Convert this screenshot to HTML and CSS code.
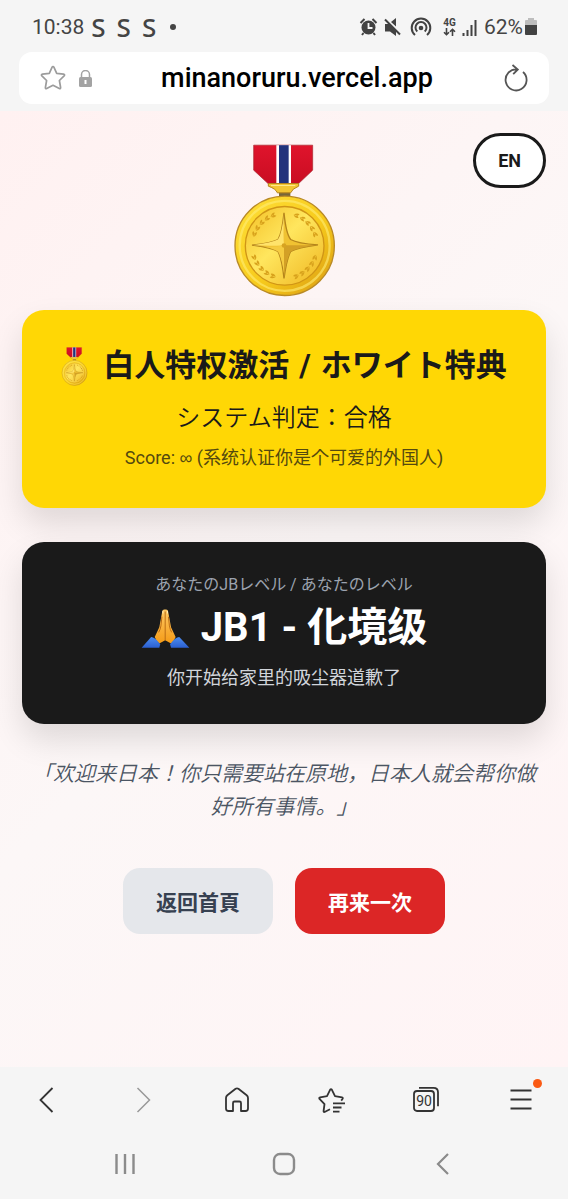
FILE: index.html
```html
<!DOCTYPE html>
<html lang="ja">
<head>
<meta charset="utf-8">
<meta name="viewport" content="width=device-width, initial-scale=1">
<title>minanoruru</title>
<link rel="stylesheet" href="styles.css">
</head>
<body>
<svg class="defs" aria-hidden="true">
  <defs>
    <linearGradient id="rim" x1="0" y1="0" x2="1" y2="1">
      <stop offset="0" stop-color="#ffe03a"/><stop offset=".55" stop-color="#f7cb1c"/><stop offset="1" stop-color="#d99a12"/>
    </linearGradient>
    <linearGradient id="face" x1="0" y1="0" x2="1" y2="1">
      <stop offset="0" stop-color="#f3bf25"/><stop offset=".45" stop-color="#ffe65e"/><stop offset="1" stop-color="#efb51f"/>
    </linearGradient>
    <linearGradient id="red" x1="0" y1="0" x2="0" y2="1">
      <stop offset="0" stop-color="#e0142c"/><stop offset="1" stop-color="#c90d22"/>
    </linearGradient>
    <linearGradient id="skin" x1="0" y1="0" x2="0" y2="1">
      <stop offset="0" stop-color="#ffc964"/><stop offset="1" stop-color="#f59b16"/>
    </linearGradient>
    <linearGradient id="cuff" x1="0" y1="0" x2="0" y2="1">
      <stop offset="0" stop-color="#4c8df0"/><stop offset="1" stop-color="#2b5fd0"/>
    </linearGradient>
    <g id="leaf">
      <path d="M224 252q9-10 17-6q-6 9-17 6zM224 252q8 10 17 5q-6-9-17-5z" fill="#d8a21c"/>
    </g>
    <g id="wreath">
      <use href="#leaf" transform="rotate(16 224 349)"/><use href="#leaf" transform="rotate(28 224 349)"/>
      <use href="#leaf" transform="rotate(40 224 349)"/><use href="#leaf" transform="rotate(52 224 349)"/>
      <use href="#leaf" transform="rotate(64 224 349)"/>
    </g>
    <symbol id="medal" viewBox="66 42 315 462">
      <path d="M131 47H308V122L265 163H175L131 122Z" fill="url(#red)" stroke="#a8242c" stroke-width="2"/>
      <path d="M199 47h44v116h-44z" fill="#fff"/>
      <path d="M207 47h29v116h-29z" fill="#22337c"/>
      <path d="M207 182h34v20h-34z" fill="#77663a"/>
      <path d="M175 162H266V170Q246 178 242 190H202Q198 178 175 170Z" fill="#f3c633" stroke="#b5841a" stroke-width="3"/>
      <path d="M183 168H256" stroke="#ffe98a" stroke-width="3"/>
      <circle cx="224" cy="349" r="149" fill="url(#rim)" stroke="#b98a25" stroke-width="4"/>
      <circle cx="224" cy="349" r="135" fill="none" stroke="#ffed75" stroke-width="7" opacity=".6"/>
      <circle cx="224" cy="349" r="118" fill="url(#face)" stroke="#d09516" stroke-width="4"/>
      <use href="#wreath"/><use href="#wreath" transform="rotate(90 224 349)"/>
      <use href="#wreath" transform="rotate(180 224 349)"/><use href="#wreath" transform="rotate(270 224 349)"/>
      <path d="M222 250Q228 312 242 330Q262 342 324 346Q262 354 242 366Q230 388 222 447Q216 388 204 366Q184 354 126 347Q184 340 204 330Q216 312 222 250Z" fill="#f0c232" stroke="#b5851c" stroke-width="4"/>
      <path d="M222 254Q219 320 222 347Q180 350 130 347Q184 340 204 330Q216 312 222 254Z" fill="#ffe36b"/>
      <path d="M222 443V347H320Q262 354 242 366Q230 388 222 443Z" fill="#d3a026"/>
      <path d="M222 347Q184 356 142 348Q184 354 204 366Q216 388 222 432Z" fill="#f5cb41"/>
      <circle cx="222" cy="348" r="7" fill="#d7a321"/>
    </symbol>
  </defs>
</svg>

<header class="chrome">
  <div class="status">
    <span class="clock">10:38</span>
    <div class="notes"><span>S</span><span>S</span><span>S</span></div>
    <svg class="dot" viewBox="0 0 6 6" width="6" height="6"><circle cx="3" cy="3" r="3" fill="#444"/></svg>
    <div class="status-right">
      <svg width="19" height="20" viewBox="0 0 19 20"><circle cx="9.500" cy="10.500" r="7" fill="#424242"/><path d="M1.500 6l4-4M17.500 6l-4-4M4.500 16l-1.500 2M14.500 16l1.500 2" stroke="#424242" stroke-width="2"/><path d="M9.500 6v5h4" fill="none" stroke="#f5f5f5" stroke-width="1.800"/></svg>
      <svg class="mute" width="17" height="20" viewBox="0 0 17 20"><path d="M1 7h4l7 7v5l-6-4.500H1zM7 5l5-4v8.500z" fill="#424242"/><path d="M1 2.500l15 15" stroke="#424242" stroke-width="2"/></svg>
      <svg class="hotspot" width="22" height="20" viewBox="0 0 22 20"><g fill="none" stroke="#424242" stroke-width="2"><path d="M5 18a9.300 9.300 0 1 1 12 0"/><path d="M7.300 14.600a5.500 5.500 0 1 1 7.400 0"/></g><circle cx="11" cy="11" r="2.300" fill="#424242"/></svg>
      <div class="net"><span>4G</span><svg width="13" height="8" viewBox="0 0 13 8"><path d="M3.500 0v6.500M1 4.200l2.500 2.500L6 4.200M9.500 8V1.500M7 3.800l2.500-2.500L12 3.800" fill="none" stroke="#424242" stroke-width="1.600"/></svg></div>
      <svg width="16" height="17" viewBox="0 0 16 17"><path d="M1.500 17v-3M5.500 17v-6M9.500 17V6M13.500 17V1" stroke="#424242" stroke-width="2"/></svg>
      <span class="percent">62%</span>
      <svg width="12" height="18" viewBox="0 0 12 18"><path d="M3 0h6v2h2a1 1 0 0 1 1 1v5H0V3a1 1 0 0 1 1-1h2z" fill="#bdbdbd"/><path d="M0 7h12v9a1 1 0 0 1-1 1H1a1 1 0 0 1-1-1z" fill="#424242"/></svg>
    </div>
  </div>
  <div class="urlbar">
    <button class="icon" aria-label="Bookmark"><svg width="26" height="26" viewBox="0 0 26 26"><path d="M13 1.500q.6 0 1 .9l2.700 6 6.800.8q1.800.3.600 1.600l-4.700 4.700 1.200 7q.1 1.600-1.300 1L13 20.300l-6.300 3.200q-1.400.6-1.300-1l1.200-7-4.700-4.700q-1.200-1.300.6-1.600l6.800-.8 2.700-6q.4-.9 1-.9z" fill="none" stroke="#9c9c9c" stroke-width="1.700" stroke-linejoin="round"/></svg></button>
    <svg class="lock" width="13" height="17" viewBox="0 0 13 17"><path d="M2.500 7.500V4.500a4 4 0 0 1 8 0v3" fill="none" stroke="#a3a3a3" stroke-width="1.500"/><rect y="7" width="13" height="10" rx="1.500" fill="#a3a3a3"/><path d="M6.500 10v4" stroke="#fff" stroke-width="2"/></svg>
    <span class="url">minanoruru.vercel.app</span>
    <button class="icon" aria-label="Reload"><svg width="26" height="28" viewBox="0 0 26 28"><path d="M21 8A10.500 10.500 0 1 1 15.500 5.500M10.500 1l5.300 4.500-4.600 4.700" fill="none" stroke="#555" stroke-width="1.800"/></svg></button>
  </div>
</header>

<main class="page">
  <button class="lang">EN</button>
  <svg class="hero" role="img" aria-label="勲章"><use href="#medal"/></svg>

  <section class="card gold">
    <h1><svg class="mini" aria-hidden="true"><use href="#medal"/></svg><span class="title"><span>白人特权激活</span><span>/</span><span>ホワイト特典</span></span></h1>
    <p class="verdict">システム判定：合格</p>
    <p class="small score">Score: <span class="infinity">∞</span> (系统认证你是个可爱的外国人)</p>
  </section>

  <section class="card dark">
    <p class="label">あなたのJBレベル / あなたのレベル</p>
    <h2><svg class="hands" viewBox="360 200 150 124" aria-hidden="true">
      <path d="M434 204q-8-2-9 6l-9 48-14 30q4 12 14 20l18-10zM434 204q8-2 9 6l9 48 14 30q-4 12-14 20l-18-10z" fill="url(#skin)"/>
      <path d="M434 210v88M424 226l-3 28q-2 12-7 20M444 226l3 28q2 12 7 20" fill="none" stroke="#b96b13" stroke-width="3"/>
      <path d="M427 208v8M441 208v8" stroke="#fff0bf" stroke-width="3"/>
      <path d="M391 288Q402 288 419 310L416 321H362Z" fill="url(#cuff)"/>
      <path d="M477 288Q466 288 449 310L452 321H508Z" fill="url(#cuff)"/>
    </svg> JB1 - 化境级</h2>
    <p class="small">你开始给家里的吸尘器道歉了</p>
  </section>

  <p class="quote">「欢迎来日本！你只需要站在原地，日本人就会帮你做好所有事情。」</p>

  <div class="actions">
    <button class="btn home">返回首頁</button>
    <button class="btn again">再来一次</button>
  </div>
</main>

<footer class="chrome">
  <nav class="toolbar">
    <button class="icon" aria-label="Back"><svg width="28" height="28" viewBox="0 0 28 28"><path d="M19.500 2L7.500 14l12 12" fill="none" stroke="#333" stroke-width="1.800"/></svg></button>
    <button class="icon" aria-label="Forward"><svg width="28" height="28" viewBox="0 0 28 28"><path d="M9.500 2l12 12-12 12" fill="none" stroke="#999" stroke-width="1.500"/></svg></button>
    <button class="icon" aria-label="Home"><svg width="28" height="28" viewBox="0 0 28 28"><path d="M3 12q0-1.800 1.300-2.800l8.300-6.400q1.400-1 2.800 0l8.300 6.400Q25 10.200 25 12v10.500a2.500 2.500 0 0 1-2.500 2.500H18v-8q0-1.500-1.500-1.500h-5Q10 15.500 10 17v8H5.500A2.500 2.500 0 0 1 3 22.500z" fill="none" stroke="#333" stroke-width="1.800" stroke-linejoin="round"/></svg></button>
    <button class="icon" aria-label="Bookmarks"><svg width="28" height="28" viewBox="0 0 28 28"><path d="M13 23.300L7.600 26q-1.200.4-1-1l.9-6.800-5-5.300q-.8-1.200.6-1.500l6.900-1.300 3.200-6.500q.8-1.100 1.600 0l3.200 6.500 7 1.300q1.400.4.500 1.600l-1.300 1.600M16 17.300h12M16 21.500h8.500M16 25.700h6.500" fill="none" stroke="#333" stroke-width="1.800" stroke-linejoin="round"/></svg></button>
    <button class="icon tabs" aria-label="Tabs"><svg width="28" height="28" viewBox="0 0 28 28"><rect x="2" y="5" width="20" height="20" rx="3" fill="none" stroke="#333" stroke-width="1.800"/><path d="M7 1.800h14.500q4.500 0 4.500 4.500v14" fill="none" stroke="#333" stroke-width="1.800"/><text x="12" y="20" text-anchor="middle">90</text></svg></button>
    <button class="icon menu" aria-label="Menu"><svg width="28" height="28" viewBox="0 0 28 28"><path d="M3.500 4.500h21M3.500 13.500h21M3.500 22.500h21" stroke="#333" stroke-width="1.800"/></svg><span class="badge"></span></button>
  </nav>
  <nav class="sysnav">
    <button class="icon" aria-label="Recents"><svg width="24" height="24" viewBox="0 0 24 24"><path d="M3.500 2v20M12 2v20M20.500 2v20" stroke="#8b8b8b" stroke-width="2.400"/></svg></button>
    <button class="icon" aria-label="Home screen"><svg width="24" height="24" viewBox="0 0 24 24"><rect x="2" y="2" width="20" height="20" rx="6" fill="none" stroke="#8b8b8b" stroke-width="2.400"/></svg></button>
    <button class="icon" aria-label="System back"><svg width="24" height="24" viewBox="0 0 24 24"><path d="M17 2L7 12l10 10" fill="none" stroke="#8b8b8b" stroke-width="2.200"/></svg></button>
  </nav>
</footer>
</body>
</html>
```
FILE: styles.css
```css
* { box-sizing: border-box; }

body {
  margin: 0;
  min-height: 100vh;
  display: flex;
  flex-direction: column;
  font-family: Roboto, "Noto Sans CJK JP", sans-serif;
  color: #1a1a1a;
  text-spacing-trim: space-all;
}

h1, h2, p { margin: 0; }
svg { display: block; flex: none; }
button { font-family: inherit; border: 0; cursor: pointer; }
.defs { position: absolute; width: 0; height: 0; }
.chrome { background: #f5f5f5; }

.icon {
  display: flex;
  align-items: center;
  justify-content: center;
  padding: 0;
  background: none;
}

/* Status bar and address field */
header { padding-bottom: 7px; }

.status {
  display: flex;
  align-items: center;
  height: 52px;
  padding: 2px 31px 0 32px;
  color: #444;
}
.clock, .percent { font-size: 21px; font-weight: 400; }
.notes {
  display: flex;
  gap: 11px;
  margin-left: 7px;
  font-family: "Noto Sans", sans-serif;
  font-size: 26px;
  font-weight: 500;
  line-height: 28px;
}
.dot { margin-left: 14px; }
.status-right {
  display: flex;
  align-items: center;
  gap: 6px;
  margin-left: auto;
}
.hotspot { margin-left: 3px; }
.net {
  display: flex;
  flex-direction: column;
  align-items: center;
  margin-left: 5px;
  font-size: 10px;
  font-weight: 700;
  line-height: 10px;
}
.percent + svg { margin-left: -4px; }

.urlbar {
  display: flex;
  align-items: center;
  height: 52px;
  margin: 0 19px;
  padding: 0 21px;
  background: #fff;
  border-radius: 13px;
}
.lock { margin-left: 13px; }
.url {
  flex: 1;
  text-align: center;
  color: #000;
  font-size: 27px;
  font-weight: 500;
}

/* Result page */
.page {
  position: relative;
  flex: 1;
  padding: 32px 22px;
  background: linear-gradient(135deg, #fff1f1 0%, #fcf7f7 50%, #fff4f5 100%);
  text-align: center;
}
.lang {
  position: absolute;
  top: 22px;
  right: 22px;
  height: 55px;
  padding: 0 22px;
  border: 3px solid #1a1a1a;
  border-radius: 28px;
  background: #fff;
  color: #1a1a1a;
  font-size: 18px;
  font-weight: 700;
}
.hero {
  width: 105px;
  height: 155px;
  margin: 0 auto 12px;
}

.card {
  padding: 32px 22px;
  border-radius: 22px;
  box-shadow: 0 16px 32px rgba(0, 0, 0, 0.12);
}
.gold {
  padding-bottom: 36px;
  background: #ffd705;
}
.dark {
  margin-top: 34px;
  background: #1a1a1a;
  color: #fff;
}

h1, h2 {
  display: flex;
  align-items: center;
  justify-content: center;
  font-weight: 700;
}
h1 {
  gap: 15px;
  font-size: 31px;
  line-height: 48px;
}
.title {
  display: flex;
  flex-wrap: wrap;
  justify-content: center;
  gap: 0 10px;
}
h2 {
  gap: 11px;
  margin: 4px 0 8px;
  font-size: 40px;
  line-height: 56px;
}
.mini { width: 27px; height: 39px; }
.hands { width: 49px; height: 41px; }

.verdict {
  margin: 10px 0 8px;
  font-size: 24px;
  font-weight: 350;
  line-height: 36px;
}
.small { font-size: 18px; line-height: 28px; }
.score { color: #54490f; }
.infinity { font-family: "Liberation Sans", sans-serif; }
.dark .small { color: #d1d5db; }
.label {
  color: #9ca3af;
  font-size: 16px;
  line-height: 22px;
}

.quote {
  margin: 34px 0 44px;
  color: #4b5563;
  font-size: 21px;
  font-style: italic;
  font-weight: 350;
  line-height: 33px;
}

.actions {
  display: flex;
  justify-content: center;
  gap: 22px;
}
.btn {
  height: 66px;
  padding: 0 33px;
  border-radius: 17px;
  font-size: 21px;
  font-weight: 700;
}
.home { background: #e5e7eb; color: #374151; }
.again { background: #dc2626; color: #fff; }

/* Browser toolbar and system navigation */
.toolbar, .sysnav {
  display: grid;
  align-items: center;
  height: 66px;
}
.toolbar { grid-template-columns: repeat(6, 1fr); }
.sysnav {
  grid-template-columns: repeat(3, 1fr);
  padding: 0 8% 4px;
}
.tabs text { fill: #333; font-size: 14px; }
.menu { position: relative; }
.badge {
  position: absolute;
  top: -7px;
  left: calc(50% + 12px);
  width: 9px;
  height: 9px;
  border-radius: 50%;
  background: #fa5a14;
}
```
